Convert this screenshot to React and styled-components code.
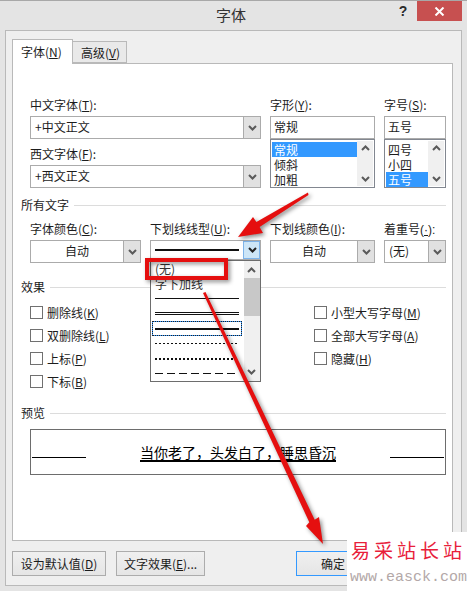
import React from 'react';
import styled, { createGlobalStyle } from 'styled-components';

const GlobalStyle = createGlobalStyle`
  html, body {
    margin: 0;
    padding: 0;
    overflow: hidden;
    background: #e4e4e4;
  }
  * {
    box-sizing: border-box;
  }
  body {
    font-family: "Noto Sans CJK SC", "Liberation Sans", sans-serif;
    font-size: 12px;
    color: #1c1c1c;
  }
`;

const Dialog = styled.div`
  position: relative;
  width: 467px;
  height: 591px;
  border-top: 1px solid #a8a8a8;
  background: #e4e4e4;
`;

const TitleBar = styled.div`
  display: grid;
  grid-template-columns: 1fr auto 1fr;
  height: 29px;
  padding-right: 5px;
`;

const Title = styled.div`
  grid-column: 2;
  font-size: 15px;
  line-height: 27px;
  color: #333;
`;

const Controls = styled.div`
  display: flex;
  justify-content: flex-end;
  align-items: flex-start;
`;

const HelpMark = styled.span`
  width: 14px;
  margin-right: 7px;
  font-family: "Liberation Sans", sans-serif;
  font-size: 14px;
  font-weight: 700;
  line-height: 21px;
  text-align: center;
  color: #2b2b2b;
`;

const CloseButton = styled.div`
  display: flex;
  align-items: center;
  justify-content: center;
  width: 45px;
  height: 20px;
  background: #c75050;
`;

const Panel = styled.div`
  display: flex;
  flex-direction: column;
  height: 556px;
  margin: 0 5px;
  padding: 8px 8px 0 6px;
  border: 1px solid #b9b9b9;
  background: #efefef;
`;

const Tabs = styled.div`
  display: flex;
  align-items: flex-end;
  height: 24px;
`;

const Tab = styled.div`
  position: relative;
  z-index: ${(p) => (p.$active ? 1 : 0)};
  width: ${(p) => p.$width}px;
  height: ${(p) => (p.$active ? 25 : 22)}px;
  margin-bottom: ${(p) => (p.$active ? -1 : 0)}px;
  margin-left: ${(p) => (p.$active ? 0 : -1)}px;
  padding-left: 8px;
  border: 1px solid #b9b9b9;
  border-bottom: ${(p) => (p.$active ? 'none' : '1px solid #b9b9b9')};
  background: ${(p) => (p.$active ? '#fff' : '#e9e9e9')};
  line-height: ${(p) => (p.$active ? 24 : 21)}px;
`;

const Sheet = styled.div`
  height: 478px;
  padding: 33px 6px 0 8px;
  border: 1px solid #b9b9b9;
  background: #fff;
`;

const Group = styled.div`
  margin-left: 9px;
`;

const FontRow = styled.div`
  display: flex;
  gap: 9px;
`;

const Field = styled.div`
  position: relative;
  width: ${(p) => p.$width}px;
`;

const Label = styled.div`
  height: 16px;
  margin-top: ${(p) => p.$top || 0}px;
  margin-bottom: 3px;
  line-height: 16px;
  white-space: nowrap;
`;

const Narrow = styled.span`
  font-family: "Liberation Sans", sans-serif;
`;

const Combo = styled.div`
  display: flex;
  align-items: stretch;
  height: ${(p) => p.$height || 23}px;
  border: 1px solid #ababab;
  background: #fff;
`;

const ComboValue = styled.div`
  flex: 1;
  padding-left: ${(p) => (p.$center ? 0 : 4)}px;
  line-height: 20px;
  text-align: ${(p) => (p.$center ? 'center' : 'left')};
  white-space: nowrap;
`;

const ComboArrow = styled.div`
  display: flex;
  align-items: center;
  justify-content: center;
  width: 17px;
  border-left: 1px solid ${(p) => (p.$hot ? '#7eb4ea' : '#ababab')};
  outline: ${(p) => (p.$hot ? '1px solid #7eb4ea' : 'none')};
  outline-offset: -1px;
  background: ${(p) => (p.$hot ? '#cde6f7' : '#e1e1e1')};
`;

const ComboStroke = styled.div`
  display: flex;
  align-items: center;
  padding-left: 4px;
`;

const TextBox = styled.div`
  height: 23px;
  padding-left: 3px;
  border: 1px solid #ababab;
  line-height: 20px;
`;

const ListBox = styled.div`
  display: flex;
  height: 49px;
  padding: 1px;
  border: 1px solid #828790;
  background: #fff;
`;

const ListItems = styled.div`
  flex: 1;
  padding-top: 1px;
`;

const ListItem = styled.div`
  height: 15px;
  padding-left: 2px;
  line-height: 15px;
  background: ${(p) => (p.$selected ? '#3399ff' : 'transparent')};
  color: ${(p) => (p.$selected ? '#fff' : 'inherit')};
`;

const ScrollBar = styled.div`
  display: flex;
  flex-direction: column;
  justify-content: space-between;
  align-items: center;
  width: 16px;
  padding: 4px 0;
  background: #f0f0f0;
`;

const SectionHead = styled.div`
  display: flex;
  align-items: center;
  gap: 5px;
  height: 16px;
  margin-top: ${(p) => p.$top}px;
  line-height: 16px;
  &::after {
    content: '';
    flex: 1;
    height: 1px;
    background: #dcdcdc;
  }
`;

const DropList = styled.div`
  position: absolute;
  z-index: 2;
  top: 47px;
  left: 0;
  display: flex;
  width: 111px;
  height: 122px;
  border: 1px solid #6d6d6d;
  background: #fff;
`;

const DropItems = styled.div`
  flex: 1;
  padding-left: 1px;
`;

const DropRow = styled.div`
  display: flex;
  align-items: center;
  height: 15px;
  margin-right: 2px;
  padding: 0 3px;
  line-height: 15px;
  color: #333;
  outline: ${(p) => (p.$selected ? '1px dotted #222' : 'none')};
  outline-offset: -1px;
  box-shadow: ${(p) => (p.$selected ? 'inset 0 0 0 1px #3399ff' : 'none')};
`;

const Stroke = styled.div`
  width: 84px;
  height: ${(p) => p.$weight}px;
  background: #111;
`;

const BrokenStroke = styled.div`
  width: 84px;
  height: ${(p) => p.$weight}px;
  background: repeating-linear-gradient(
    to right,
    #111 0,
    #111 ${(p) => p.$on}px,
    transparent ${(p) => p.$on}px,
    transparent ${(p) => p.$on + p.$off}px
  );
`;

const DoubleStroke = styled.div`
  width: 84px;
  height: 3px;
  border-top: 1px solid #111;
  border-bottom: 1px solid #111;
`;

const DropScroll = styled.div`
  position: relative;
  width: 16px;
  background: #f0f0f0;
`;

const DropThumb = styled.div`
  height: 38px;
  margin-top: 17px;
  background: #c8c8c8;
`;

const DropArrow = styled.div`
  position: absolute;
  left: 3px;
  ${(p) => (p.$up ? 'top: 6px;' : 'bottom: 6px;')}
  display: flex;
`;

const Checks = styled.div`
  display: grid;
  grid-template-columns: 284px 1fr;
  grid-auto-rows: 23px;
  margin-top: 6px;
`;

const CheckItem = styled.div`
  display: flex;
  align-items: center;
  gap: 4px;
  grid-column: ${(p) => p.$col};
  grid-row: ${(p) => p.$row};
`;

const CheckBox = styled.span`
  width: 13px;
  height: 13px;
  border: 1px solid #707070;
  background: #fff;
`;

const PreviewBox = styled.div`
  display: flex;
  align-items: center;
  justify-content: space-between;
  height: 46px;
  margin-top: 8px;
  padding: 0 1px;
  border: 1px solid #6d6d6d;
`;

const PreviewLine = styled.span`
  width: 54px;
  height: 1px;
  margin-top: 10px;
  background: #000;
`;

const PreviewText = styled.span`
  font-size: 14px;
  line-height: 16px;
  color: #000;
  text-decoration: underline;
  text-decoration-thickness: 2px;
  text-underline-offset: 2px;
`;

const Footer = styled.div`
  display: flex;
  gap: 10px;
  margin-top: 10px;
`;

const Button = styled.div`
  width: ${(p) => p.$width}px;
  height: 25px;
  margin-left: ${(p) => p.$left || 0}px;
  border: 1px solid ${(p) => (p.$primary ? '#3399ff' : '#acacac')};
  background: linear-gradient(#f0f0f0, #e5e5e5);
  line-height: 23px;
  text-align: center;
  white-space: nowrap;
`;

const Annotations = styled.svg`
  position: absolute;
  z-index: 3;
  top: -1px;
  left: 0;
  filter: drop-shadow(2px 2px 2px rgba(0, 0, 0, 0.45));
`;

const Watermark = styled.div`
  position: absolute;
  z-index: 4;
  right: 0;
  bottom: 0;
  width: 120px;
  height: 59px;
  background: #fff;
  overflow: hidden;
`;

const WatermarkTitle = styled.div`
  margin: 3px 0 0 4px;
  font-size: 19px;
  line-height: 30px;
  letter-spacing: 4px;
  color: #e8203a;
  white-space: nowrap;
`;

const WatermarkUrl = styled.div`
  margin: 5px 0 0 3px;
  font-family: "Liberation Mono", monospace;
  font-size: 15px;
  line-height: 16px;
  color: #b3a8a8;
  white-space: nowrap;
`;

const Chevron = ({ up, color = '#5a5a5a', width = 2 }) => (
  <svg width="9" height="6" viewBox="0 0 9 6" fill="none">
    <polyline
      points={up ? '1,5 4.5,1.5 8,5' : '1,1 4.5,4.5 8,1'}
      stroke={color}
      strokeWidth={width}
    />
  </svg>
);

const Key = ({ text, k, tail = '' }) => (
  <>
    {text}(<u>{k}</u>){tail}
  </>
);

const styleItems = ['常规', '倾斜', '加粗'];
const sizeItems = ['四号', '小四', '五号'];

const checkItems = [
  { text: '删除线', k: 'K', col: 1, row: 1 },
  { text: '双删除线', k: 'L', col: 1, row: 2 },
  { text: '上标', k: 'P', col: 1, row: 3 },
  { text: '下标', k: 'B', col: 1, row: 4 },
  { text: '小型大写字母', k: 'M', col: 2, row: 1 },
  { text: '全部大写字母', k: 'A', col: 2, row: 2 },
  { text: '隐藏', k: 'H', col: 2, row: 3 },
];

function App() {
  return (
    <>
      <GlobalStyle />
      <Dialog>
        <TitleBar>
          <Title>字体</Title>
          <Controls>
            <HelpMark>?</HelpMark>
            <CloseButton>
              <svg width="11" height="9" viewBox="0 0 11 9" fill="none">
                <path d="M1.5 0.5 L9.5 8.5 M9.5 0.5 L1.5 8.5" stroke="#fff" strokeWidth="2" />
              </svg>
            </CloseButton>
          </Controls>
        </TitleBar>

        <Panel>
          <Tabs>
            <Tab $active $width={61}><Key text="字体" k="N" /></Tab>
            <Tab $width={55}><Key text="高级" k="V" /></Tab>
          </Tabs>

          <Sheet>
            <Group>
              <FontRow>
                <Field $width={231}>
                  <Label><Key text="中文字体" k="T" tail=":" /></Label>
                  <Combo>
                    <ComboValue>+中文正文</ComboValue>
                    <ComboArrow><Chevron /></ComboArrow>
                  </Combo>
                  <Label $top={7}><Key text="西文字体" k="F" tail=":" /></Label>
                  <Combo>
                    <ComboValue>+西文正文</ComboValue>
                    <ComboArrow><Chevron /></ComboArrow>
                  </Combo>
                </Field>
                <Field $width={105}>
                  <Label><Key text="字形" k="Y" tail=":" /></Label>
                  <TextBox>常规</TextBox>
                  <ListBox>
                    <ListItems>
                      {styleItems.map((item, i) => (
                        <ListItem key={item} $selected={i === 0}>{item}</ListItem>
                      ))}
                    </ListItems>
                    <ScrollBar>
                      <Chevron up />
                      <Chevron />
                    </ScrollBar>
                  </ListBox>
                </Field>
                <Field $width={62}>
                  <Label><Key text="字号" k="S" tail=":" /></Label>
                  <TextBox>五号</TextBox>
                  <ListBox>
                    <ListItems>
                      {sizeItems.map((item, i) => (
                        <ListItem key={item} $selected={i === 2}>{item}</ListItem>
                      ))}
                    </ListItems>
                    <ScrollBar>
                      <Chevron up />
                      <Chevron />
                    </ScrollBar>
                  </ListBox>
                </Field>
              </FontRow>
            </Group>

            <SectionHead $top={9}>所有文字</SectionHead>
            <Group>
              <FontRow>
                <Field $width={111}>
                  <Label $top={8}><Key text="字体颜色" k="C" tail=":" /></Label>
                  <Combo>
                    <ComboValue $center>自动</ComboValue>
                    <ComboArrow><Chevron /></ComboArrow>
                  </Combo>
                </Field>
                <Field $width={111}>
                  <Label $top={8}><Key text="下划线线型" k="U" tail=":" /></Label>
                  <Combo $height={20}>
                    <ComboStroke>
                      <Stroke $weight={2} />
                    </ComboStroke>
                    <ComboValue />
                    <ComboArrow $hot><Chevron color="#222" /></ComboArrow>
                  </Combo>
                  <DropList>
                    <DropItems>
                      <DropRow>(无)</DropRow>
                      <DropRow>字下加线</DropRow>
                      <DropRow><Stroke $weight={1} /></DropRow>
                      <DropRow><DoubleStroke /></DropRow>
                      <DropRow $selected><Stroke $weight={2} /></DropRow>
                      <DropRow><BrokenStroke $weight={1} $on={2} $off={2} /></DropRow>
                      <DropRow><BrokenStroke $weight={2} $on={2} $off={2} /></DropRow>
                      <DropRow><BrokenStroke $weight={1} $on={8} $off={4} /></DropRow>
                    </DropItems>
                    <DropScroll>
                      <DropArrow $up><Chevron up /></DropArrow>
                      <DropThumb />
                      <DropArrow><Chevron /></DropArrow>
                    </DropScroll>
                  </DropList>
                </Field>
                <Field $width={105}>
                  <Label $top={8}><Key text="下划线颜色" k="I" tail=":" /></Label>
                  <Combo>
                    <ComboValue $center>自动</ComboValue>
                    <ComboArrow><Chevron /></ComboArrow>
                  </Combo>
                </Field>
                <Field $width={62}>
                  <Label $top={8}>着重号<Narrow>(<u>·</u>):</Narrow></Label>
                  <Combo>
                    <ComboValue>(无)</ComboValue>
                    <ComboArrow><Chevron /></ComboArrow>
                  </Combo>
                </Field>
              </FontRow>
            </Group>

            <SectionHead $top={16}>效果</SectionHead>
            <Group>
              <Checks>
                {checkItems.map((item) => (
                  <CheckItem key={item.k} $col={item.col} $row={item.row}>
                    <CheckBox />
                    <span><Key text={item.text} k={item.k} /></span>
                  </CheckItem>
                ))}
              </Checks>
            </Group>

            <SectionHead $top={12}>预览</SectionHead>
            <Group>
              <PreviewBox>
                <PreviewLine />
                <PreviewText>当你老了，头发白了，睡思昏沉</PreviewText>
                <PreviewLine />
              </PreviewBox>
            </Group>
          </Sheet>

          <Footer>
            <Button $width={94}><Key text="设为默认值" k="D" /></Button>
            <Button $width={89}><Key text="文字效果" k="E" tail="..." /></Button>
            <Button $width={74} $primary $left={81}>确定</Button>
          </Footer>
        </Panel>

        <Annotations width="467" height="591" viewBox="0 0 467 591">
          <rect x="147" y="260" width="79" height="18" fill="none" stroke="#e50f0f" strokeWidth="4" />
          <polygon
            points="308,192.5 256.4,222 253,217 238,237 263,233 259.6,227 308.5,195"
            fill="#e50f0f"
          />
          <polygon
            points="203,293 309.3,522.3 306,526 323,544 319,517 314.7,519.7 205.5,292"
            fill="#e50f0f"
          />
        </Annotations>

        <Watermark>
          <WatermarkTitle>易采站长站</WatermarkTitle>
          <WatermarkUrl>www.easck.com</WatermarkUrl>
        </Watermark>
      </Dialog>
    </>
  );
}

export default App;
